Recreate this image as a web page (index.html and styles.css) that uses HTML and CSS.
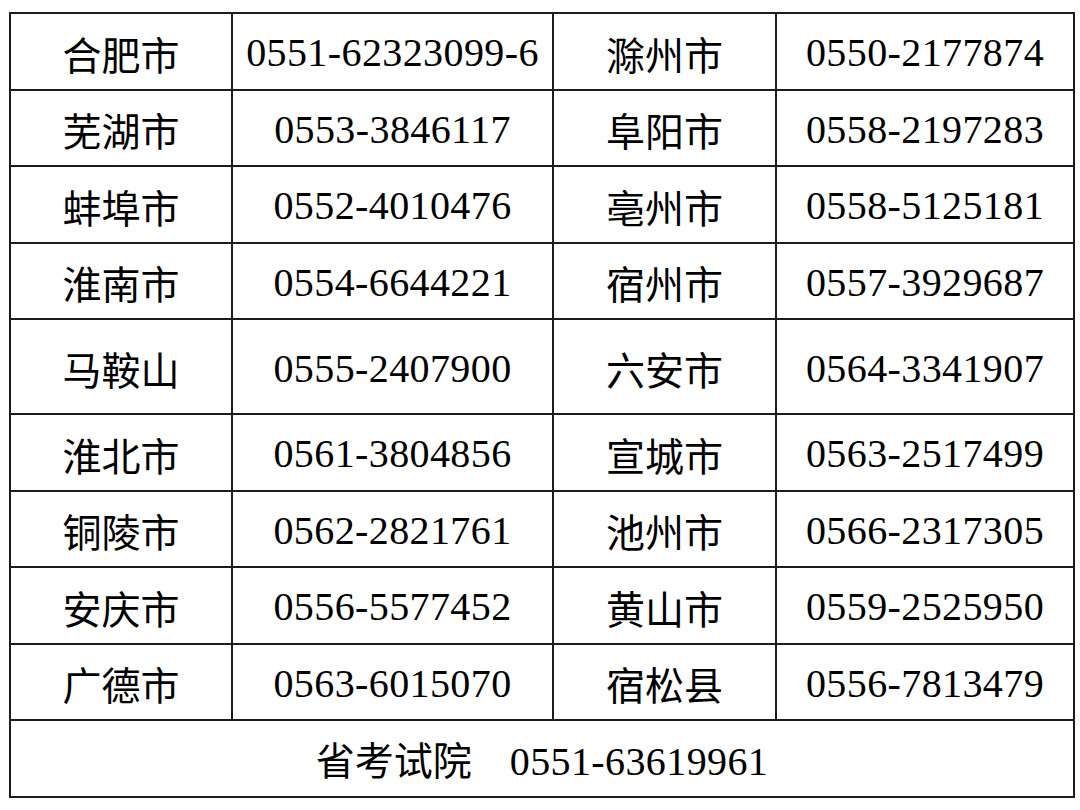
FILE: index.html
```html
<!DOCTYPE html>
<html lang="zh">
<head>
<meta charset="utf-8">
<link rel="stylesheet" href="styles.css">
</head>
<body>
<table class="phones">
  <colgroup>
    <col class="c1"><col class="c2"><col class="c3"><col class="c4">
  </colgroup>
  <tr><td class="city">合肥市</td><td class="num">0551-62323099-6</td><td class="city">滁州市</td><td class="num">0550-2177874</td></tr>
  <tr><td class="city">芜湖市</td><td class="num">0553-3846117</td><td class="city">阜阳市</td><td class="num">0558-2197283</td></tr>
  <tr><td class="city">蚌埠市</td><td class="num">0552-4010476</td><td class="city">亳州市</td><td class="num">0558-5125181</td></tr>
  <tr><td class="city">淮南市</td><td class="num">0554-6644221</td><td class="city">宿州市</td><td class="num">0557-3929687</td></tr>
  <tr class="tall"><td class="city">马鞍山</td><td class="num">0555-2407900</td><td class="city">六安市</td><td class="num">0564-3341907</td></tr>
  <tr><td class="city">淮北市</td><td class="num">0561-3804856</td><td class="city">宣城市</td><td class="num">0563-2517499</td></tr>
  <tr><td class="city">铜陵市</td><td class="num">0562-2821761</td><td class="city">池州市</td><td class="num">0566-2317305</td></tr>
  <tr><td class="city">安庆市</td><td class="num">0556-5577452</td><td class="city">黄山市</td><td class="num">0559-2525950</td></tr>
  <tr><td class="city">广德市</td><td class="num">0563-6015070</td><td class="city">宿松县</td><td class="num">0556-7813479</td></tr>
  <tr><td class="footer" colspan="4"><span class="city-inline">省考试院</span><span class="num-inline">0551-63619961</span></td></tr>
</table>
</body>
</html>
```

FILE: styles.css
```css
html, body {
  margin: 0;
  padding: 0;
  background: #ffffff;
}

body {
  padding: 12px 0 0 9px;
}

.phones {
  border-collapse: collapse;
  table-layout: fixed;
  width: 1064px;
  color: #000;
}

.c1 { width: 222px; }
.c2 { width: 321px; }
.c3 { width: 223px; }
.c4 { width: 298px; }

.phones td {
  border: 2px solid #1c1c1c;
  height: 70.5px;
  padding: 4px 0 0 0;
  text-align: center;
  vertical-align: middle;
  white-space: nowrap;
}

.phones tr.tall td {
  height: 89px;
}

.city, .city-inline {
  font-family: "Noto Sans CJK SC", sans-serif;
  font-size: 39px;
  font-weight: 400;
  line-height: 1;
}

.num, .num-inline {
  font-family: "Liberation Serif", serif;
  font-size: 40px;
  letter-spacing: 0.4px;
  line-height: 1;
}

.footer {
  line-height: 1;
}

.num-inline {
  margin-left: 38px;
}
```
